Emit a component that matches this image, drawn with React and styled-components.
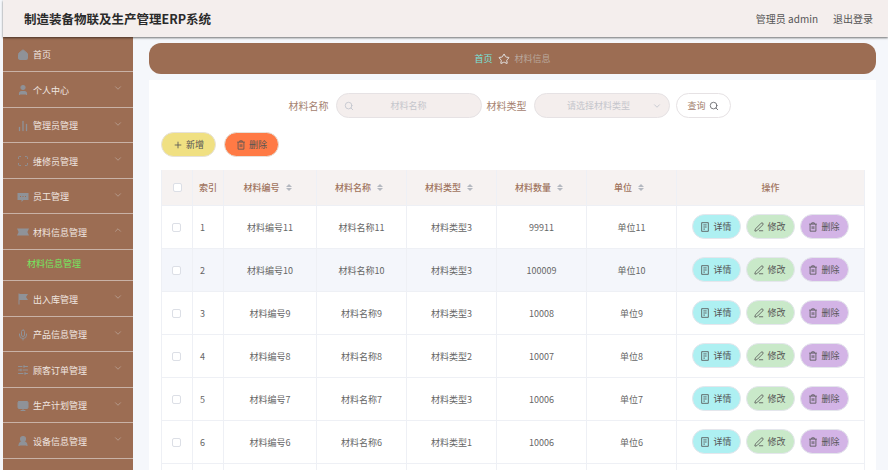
import React from "react";
import styled, { createGlobalStyle } from "styled-components";
import {
  ChevronDown,
  ChevronUp,
  Search,
  Star,
  Plus,
  PenLine,
  House,
  User,
  ChartNoAxesColumn,
  Scan,
  Mic,
  SlidersHorizontal,
  Monitor,
  UserRound,
} from "lucide-react";

const GlobalStyle = createGlobalStyle`
  html, body {
    margin: 0;
    padding: 0;
    height: 100%;
    overflow: hidden;
    background: #f5f7fb;
    font-family: "Noto Sans CJK SC", "Liberation Sans", sans-serif;
  }
  * { box-sizing: border-box; }
`;

// element 图标 lucide 里没有的, 自己画
const DeleteIcon = () => (
  <svg width="10" height="10" viewBox="0 0 12 12" fill="none" stroke="currentColor" strokeWidth="1">
    <path d="M1.5 2.5h9M4.5 2.5v-1.5h3v1.5M2.5 2.5v8.5h7v-8.5M5 5v3.5M7 5v3.5" />
  </svg>
);
const TicketsIcon = () => (
  <svg width="10" height="10" viewBox="0 0 12 12" fill="none" stroke="currentColor" strokeWidth="1">
    <path d="M2 .8h8v10.4h-8zM4 3.5h4M4 6h4M4 8.5h2" />
  </svg>
);
const ChatIcon = () => (
  <svg width="12" height="12" viewBox="0 0 12 12" fill="currentColor">
    <path d="M.5 2h11v7h-5l-2 2v-2h-4z" />
    <path d="M3 5h1v1h-1zM5.5 5h1v1h-1zM8 5h1v1h-1z" fill="#9c6d53" />
  </svg>
);
const TicketIcon = () => (
  <svg width="12" height="12" viewBox="0 0 12 12" fill="currentColor">
    <path d="M0 2.5h12l-1.6 3.5 1.6 3.5h-12l1.6-3.5z" />
  </svg>
);
const FlagIcon = () => (
  <svg width="12" height="12" viewBox="0 0 12 12" fill="currentColor">
    <path d="M1.5 .5h1v11h-1zM2.5 1h8.5l-2 3 2 3h-8.5z" />
  </svg>
);

const menus = [
  { name: "首页", icon: <House size={12} fill="currentColor" />, noArrow: true, h: 35 },
  { name: "个人中心", icon: <User size={12} strokeWidth={2.4} fill="currentColor" />, h: 36 },
  { name: "管理员管理", icon: <ChartNoAxesColumn size={12} strokeWidth={2.6} />, h: 35 },
  { name: "维修员管理", icon: <Scan size={12} />, h: 36 },
  { name: "员工管理", icon: <ChatIcon />, h: 35 },
  { name: "材料信息管理", icon: <TicketIcon />, open: true, h: 36 },
  { name: "出入库管理", icon: <FlagIcon />, h: 36 },
  { name: "产品信息管理", icon: <Mic size={12} />, h: 35 },
  { name: "顾客订单管理", icon: <SlidersHorizontal size={12} />, h: 36 },
  { name: "生产计划管理", icon: <Monitor size={12} fill="currentColor" />, h: 35 },
  { name: "设备信息管理", icon: <UserRound size={12} strokeWidth={2.4} fill="currentColor" />, h: 36 },
  { name: "", h: 36 },
];

const rows = [
  ["1", "材料编号11", "材料名称11", "材料类型3", "99911", "单位11"],
  ["2", "材料编号10", "材料名称10", "材料类型3", "100009", "单位10"],
  ["3", "材料编号9", "材料名称9", "材料类型3", "10008", "单位9"],
  ["4", "材料编号8", "材料名称8", "材料类型2", "10007", "单位8"],
  ["5", "材料编号7", "材料名称7", "材料类型3", "10006", "单位7"],
  ["6", "材料编号6", "材料名称6", "材料类型1", "10006", "单位6"],
  ["", "", "", "", "", ""],
];

const heads = ["材料编号", "材料名称", "材料类型", "材料数量", "单位"];

const App = () => {
  return (
    <>
      <GlobalStyle />
      <Page>
        <Header>
          <Title>制造装备物联及生产管理ERP系统</Title>
          <HeaderRight>
            <span>管理员 admin</span>
            <span>退出登录</span>
          </HeaderRight>
        </Header>
        <Body>
          <Side>
            {menus.map((m, i) => (
              <React.Fragment key={i}>
                <MenuItem $h={m.h}>
                  {m.icon && <MenuIcon>{m.icon}</MenuIcon>}
                  <span>{m.name}</span>
                  {m.name && !m.noArrow && (
                    <Arrow>
                      {m.open ? <ChevronUp size={10} /> : <ChevronDown size={10} />}
                    </Arrow>
                  )}
                </MenuItem>
                {m.open && <SubItem>材料信息管理</SubItem>}
              </React.Fragment>
            ))}
          </Side>
          <Main>
            <Crumb>
              <CrumbHome>首页</CrumbHome>
              <Star size={12} color="#e6e6e6" />
              <CrumbNow>材料信息</CrumbNow>
            </Crumb>
            <Card>
              <SearchRow>
                <FieldLabel>材料名称</FieldLabel>
                <InputBox>
                  <Search size={10} color="#c0c4cc" />
                  <span>材料名称</span>
                </InputBox>
                <FieldLabel>材料类型</FieldLabel>
                <SelectBox>
                  <span>请选择材料类型</span>
                  <ChevronDown size={10} color="#c0c4cc" />
                </SelectBox>
                <QueryBtn>
                  查询
                  <Search size={10} color="#606266" />
                </QueryBtn>
              </SearchRow>
              <ActionRow>
                <PillBtn $bg="#f0e082" $w={55}>
                  <Plus size={10} />
                  新增
                </PillBtn>
                <PillBtn $bg="#ff7a45" $w={55}>
                  <DeleteIcon />
                  删除
                </PillBtn>
              </ActionRow>
              <Table>
                <colgroup>
                  <col width="31" />
                  <col width="31" />
                  <col width="93" />
                  <col width="90" />
                  <col width="90" />
                  <col width="90" />
                  <col width="90" />
                  <col width="188" />
                </colgroup>
                <thead>
                  <tr>
                    <Th>
                      <Check $head />
                    </Th>
                    <Th>索引</Th>
                    {heads.map((h) => (
                      <Th key={h}>
                        <HeadCell>
                          {h}
                          <SortMark>
                            <i />
                            <b />
                          </SortMark>
                        </HeadCell>
                      </Th>
                    ))}
                    <Th>操作</Th>
                  </tr>
                </thead>
                <tbody>
                  {rows.map((r, i) => (
                    <Tr key={i} $alt={i === 1}>
                      <Td>{r[0] && <Check />}</Td>
                      <IndexTd>{r[0]}</IndexTd>
                      {r.slice(1).map((c, j) => (
                        <Td key={j}>{c}</Td>
                      ))}
                      <OpsTd>
                        {r[0] && (
                          <Ops>
                            <RowBtn $bg="#aef0f2">
                              <TicketsIcon />
                              详情
                            </RowBtn>
                            <RowBtn $bg="#c9e9c9">
                              <PenLine size={10} />
                              修改
                            </RowBtn>
                            <RowBtn $bg="#d3b4e6">
                              <DeleteIcon />
                              删除
                            </RowBtn>
                          </Ops>
                        )}
                      </OpsTd>
                    </Tr>
                  ))}
                </tbody>
              </Table>
            </Card>
          </Main>
        </Body>
      </Page>
    </>
  );
};

const Page = styled.div`
  width: 888px;
  height: 470px;
  padding-left: 3px;
  overflow: hidden;
  background: #f5f7fb;
`;
const Header = styled.header`
  height: 37px;
  display: flex;
  align-items: center;
  justify-content: space-between;
  padding: 0 15px 1px 21px;
  background: #f4eeed;
  box-shadow: 0 1px 2px rgba(0, 0, 0, 0.55);
  position: relative;
`;
const Title = styled.div`
  font-size: 12.5px;
  font-weight: 700;
  color: #2a2a2a;
`;
const HeaderRight = styled.div`
  display: flex;
  gap: 15px;
  font-size: 10px;
  color: #555;
`;
const Body = styled.div`
  display: flex;
  height: 433px;
`;
const Side = styled.aside`
  width: 130px;
  flex: none;
  background: #9c6d53;
`;
const MenuItem = styled.div`
  height: ${(p) => p.$h}px;
  display: flex;
  align-items: center;
  padding: 1px 10px 0 14px;
  font-size: 9px;
  color: #f0e6e0;
  border-bottom: 1px solid #c9b2a6;
`;
const MenuIcon = styled.span`
  width: 16px;
  display: flex;
  color: #8f9298;
`;
const Arrow = styled.span`
  margin-left: auto;
  display: flex;
  color: #b9a093;
  padding-bottom: 4px;
`;
const SubItem = styled.div`
  height: 31px;
  padding: 0 0 3px 24px;
  display: flex;
  align-items: center;
  font-size: 9px;
  color: #74e860;
  border-bottom: 1px solid #c9b2a6;
`;
const Main = styled.main`
  flex: 1;
  padding: 6px 12px 0 16px;
  min-width: 0;
`;
const Crumb = styled.nav`
  height: 31px;
  border-radius: 12px;
  background: #9c6d53;
  display: flex;
  align-items: center;
  justify-content: center;
  gap: 5px;
  font-size: 9px;
`;
const CrumbHome = styled.span`
  color: #76e3dc;
`;
const CrumbNow = styled.span`
  color: #b9a79c;
`;
const Card = styled.section`
  margin-top: 6px;
  height: 400px;
  padding: 13px 12px 0;
  background: #fff;
`;
const SearchRow = styled.div`
  display: flex;
  align-items: center;
  justify-content: center;
  height: 25px;
  padding-right: 6px;
`;
const FieldLabel = styled.label`
  font-size: 10px;
  color: #a58270;
  margin-right: 7px;
`;
const InputBox = styled.div`
  width: 146px;
  height: 25px;
  margin-right: 5px;
  border-radius: 13px;
  border: 1px solid #e6e2e4;
  background: #f4eeed;
  display: flex;
  align-items: center;
  padding: 0 7px;
  font-size: 9px;
  color: #c5c6cc;
  span {
    flex: 1;
    text-align: center;
    padding-right: 10px;
  }
`;
const SelectBox = styled(InputBox)`
  width: 136px;
  margin-right: 6px;
  span {
    padding-left: 4px;
    padding-right: 0;
  }
`;
const QueryBtn = styled.button`
  width: 55px;
  height: 25px;
  border-radius: 13px;
  border: 1px solid #e6e2e4;
  background: #fff;
  display: flex;
  align-items: center;
  justify-content: center;
  gap: 3px;
  padding: 0;
  font: inherit;
  font-size: 9px;
  color: #a58270;
`;
const ActionRow = styled.div`
  display: flex;
  gap: 8px;
  margin-top: 14px;
`;
const PillBtn = styled.button`
  width: ${(p) => p.$w}px;
  height: 25px;
  border: 1px solid #e6e2da;
  border-radius: 13px;
  background: ${(p) => p.$bg};
  display: flex;
  align-items: center;
  justify-content: center;
  gap: 3px;
  padding: 0;
  font: inherit;
  font-size: 9px;
  color: #555;
`;
const Table = styled.table`
  margin-top: 13px;
  width: 703px;
  table-layout: fixed;
  border-collapse: collapse;
  border-left: 1px solid #eef0f5;
`;
const Th = styled.th`
  height: 35px;
  padding: 0;
  background: #f6f2f1;
  border: 1px solid #eef0f5;
  border-top: 0;
  font-size: 9px;
  font-weight: 500;
  color: #a0745e;
  text-align: center;
`;
const HeadCell = styled.span`
  display: inline-flex;
  align-items: center;
  gap: 6px;
  padding-right: 5px;
`;
const SortMark = styled.span`
  display: inline-flex;
  flex-direction: column;
  gap: 1px;
  i, b {
    display: block;
    width: 0;
    height: 0;
    border-left: 3px solid transparent;
    border-right: 3px solid transparent;
  }
  i { border-bottom: 3px solid #b4b8c0; }
  b { border-top: 3px solid #b4b8c0; }
`;
const Tr = styled.tr`
  height: 43px;
  background: ${(p) => (p.$alt ? "#f4f6fb" : "#fff")};
`;
const Td = styled.td`
  padding: 1px 0 0;
  border: 1px solid #eef0f5;
  font-size: 9px;
  color: #666;
  text-align: center;
`;
const IndexTd = styled(Td)`
  text-align: left;
  padding-left: 7px;
`;
const OpsTd = styled(Td)`
  padding: 0 1px 0 0;
`;
const Check = styled.span`
  display: block;
  width: 9px;
  height: 9px;
  margin: ${(p) => (p.$head ? "0 auto" : "0 auto 0 10px")};
  background: #fff;
  border: 1px solid #dcdfe6;
  border-radius: 2px;
`;
const Ops = styled.div`
  display: flex;
  justify-content: center;
  gap: 5px;
`;
const RowBtn = styled.button`
  width: 49px;
  height: 25px;
  border: 1px solid #e4e6ec;
  border-radius: 13px;
  background: ${(p) => p.$bg};
  display: flex;
  align-items: center;
  justify-content: center;
  gap: 3px;
  padding: 0;
  font: inherit;
  font-size: 9px;
  color: #555;
`;

export default App;
